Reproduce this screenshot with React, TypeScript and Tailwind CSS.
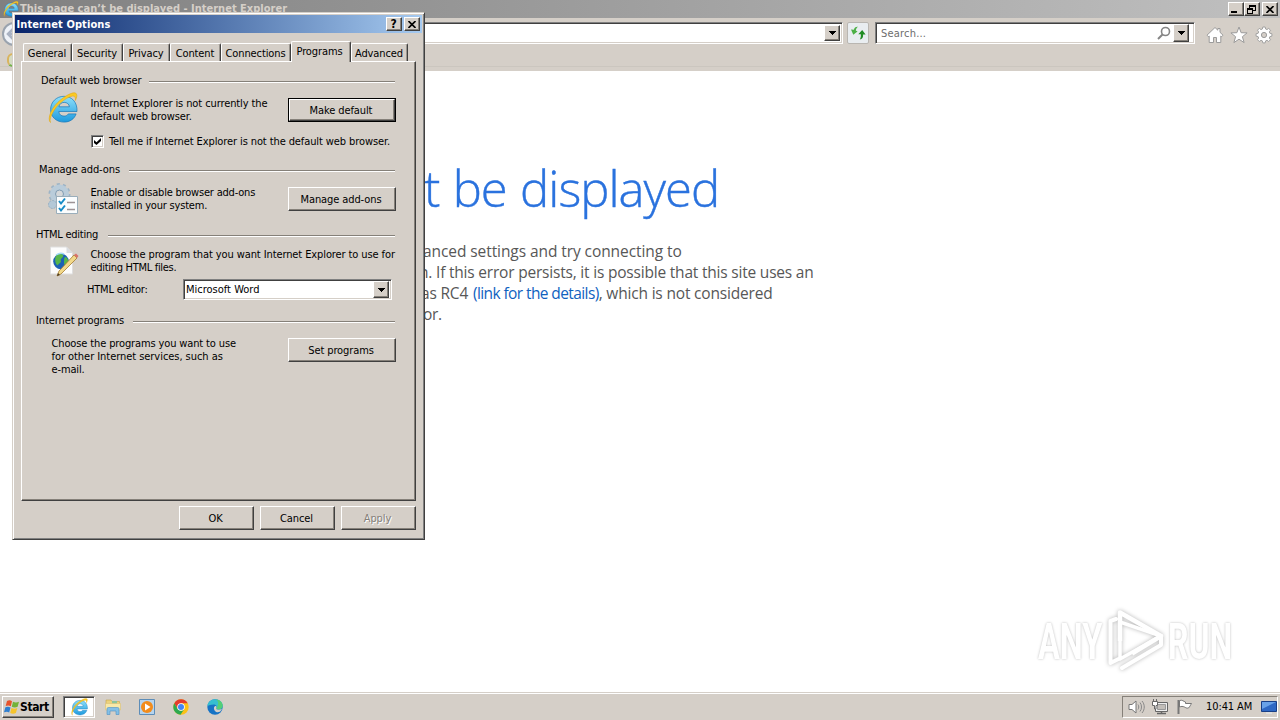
import type { ReactNode } from "react";

const RAISED =
  "border border-t-white border-l-white border-r-[#404040] border-b-[#404040] shadow-[inset_-1px_-1px_0_#858079] bg-[#d5cfc8]";
const SUNKEN =
  "border border-t-[#808080] border-l-[#808080] border-r-white border-b-white shadow-[inset_1px_1px_0_#404040,inset_-1px_-1px_0_#d5cfc8] bg-white";

function IeLogo({ className }: { className: string }) {
  return (
    <svg viewBox="1 1 30 31" className={className}>
      <defs>
        <linearGradient id="ieBlue" x1="0" y1="0" x2="0" y2="1">
          <stop offset="0" stopColor="#8fe0fa" />
          <stop offset="1" stopColor="#1d9ade" />
        </linearGradient>
      </defs>
      <path
        d="M30 20H11.800c.3 3 2.300 4.600 5.200 4.600 2 0 3.500-.8 4.300-2.200h7.800c-1.800 5.200-6.400 8.200-12 8.200C9.300 30.600 3.600 25.400 3.600 18S9.300 4.800 17 4.800 30.500 10.500 30 20zM11.900 15.300h10.500c-.3-2.800-2.400-4.400-5.200-4.400s-4.800 1.600-5.300 4.400z"
        fill="url(#ieBlue)"
        stroke="#1877b8"
        strokeWidth=".7"
      />
      <path
        d="M3.500 31C-.5 27 5 15 14 8 21 2.500 28-.5 29.500 2.500c.8 1.600.2 4-1.200 6.500.4-3-.3-4.700-2.600-4.400C21.500 5 12 11 7 19c-3.500 5.800-4.500 9.500-3.500 12z"
        fill="#fbc924"
        stroke="#dba210"
        strokeWidth=".5"
      />
    </svg>
  );
}

function Arrow() {
  return (
    <svg viewBox="0 0 7 4" className="h-1 w-[7px]" shapeRendering="crispEdges">
      <path d="M0 0h7L3.500 4z" fill="#000" />
    </svg>
  );
}

function WinButton({ children, className }: { children: ReactNode; className: string }) {
  return (
    <button className={`${RAISED} flex h-[14px] w-4 items-center justify-center pr-px ${className}`}>
      {children}
    </button>
  );
}

function CloseGlyph() {
  return (
    <svg viewBox="0 0 8 7" className="h-[7px] w-2">
      <path d="M.5 0l7 7M7.500 0l-7 7" stroke="#000" strokeWidth="1.600" />
    </svg>
  );
}

function BrowserChrome() {
  return (
    <header className="flex h-[71px] flex-col bg-[#d5cfc8]">
      <div className="flex h-[18px] items-center bg-linear-to-r from-[#808080] to-[#c0c0c0] pr-[2px] pl-[3px]">
        <IeLogo className="h-4 w-4 shrink-0" />
        <span className="ml-px flex-1 text-[11px] leading-[18px] font-bold tracking-[0.01px] whitespace-nowrap text-[#d5cfc8]">
          This page can’t be displayed - Internet Explorer
        </span>
        <WinButton className="">
          <span className="mt-[6px] mr-1 h-[2px] w-[6px] bg-black" />
        </WinButton>
        <WinButton className="mr-[2px]">
          <svg viewBox="0 0 9 9" className="h-[9px] w-[9px]" shapeRendering="crispEdges">
            <path d="M2.500 3V.5h6v5H6M2 1h7M.5 3.500h5v5h-5zM0 4h6" fill="none" stroke="#000" />
          </svg>
        </WinButton>
        <WinButton className="">
          <CloseGlyph />
        </WinButton>
      </div>
      <div className="flex h-[31px] items-start pt-1">
        <div className="ml-[2px] h-6 w-6 shrink-0 rounded-full border-2 border-[#9aa3ae] bg-[#eef2f8]">
          <svg viewBox="0 0 20 20" className="h-5 w-5">
            <path d="M10 4L4 10l6 6M4 10h12" fill="none" stroke="#a9b2c2" strokeWidth="2.500" />
          </svg>
        </div>
        <div className={`${SUNKEN} ml-10 flex h-[22px] flex-1 justify-end p-[2px]`}>
          <button className={`${RAISED} flex w-4 items-center justify-center`}>
            <Arrow />
          </button>
        </div>
        <button className="ml-1 flex h-[22px] w-[22px] items-center justify-center rounded-[2px] border border-[#b9b6b1] bg-[#e9edf0]">
          <svg viewBox="0 0 16 14" className="h-[14px] w-4">
            <path d="M8 .8C5.600.600 4.300 1.600 3.900 3.800L1 3.400l2.300 5.400L7.500 5.400 5.800 4.500C6 3 6.600 1.800 8 .8z" fill="#4cb046" />
            <path d="M9.800 13.600c2.500-.6 3.500-2.400 3.300-5.200l2.500.1L12.200 4 8.300 8.200l2.500.1c.2 2.100 0 3.700-1 5.300z" fill="#218c24" />
          </svg>
        </button>
        <div className={`${SUNKEN} ml-[6px] flex h-[22px] w-[320px] items-center py-[2px] pr-[5px] pl-[5px]`}>
          <span className="flex-1 pt-[2px] text-[11px] tracking-[0.2px] text-[#6d6d6d]">Search...</span>
          <svg viewBox="0 0 14 14" className="mr-[2px] h-[14px] w-[14px]">
            <circle cx="8.500" cy="5.500" r="4" fill="none" stroke="#858585" strokeWidth="1.600" />
            <path d="M5.500 8.500L1 13" stroke="#858585" strokeWidth="2" />
          </svg>
          <button className={`${RAISED} flex h-[18px] w-4 items-center justify-center`}>
            <Arrow />
          </button>
        </div>
        <svg viewBox="0 0 18 18" className="mt-1 ml-[11px] h-[18px] w-[18px]">
          <path
            d="M9 1.500L1 9.200l1.400 1.500.8-.7v6.500h4.300v-5h3v5h4.300V10l.8.7L17 9.200l-3-2.900V2.500h-2.200v1.700z"
            fill="#fff"
            stroke="#9b9b9b"
          />
        </svg>
        <svg viewBox="0 0 18 18" className="mt-1 ml-[6px] h-[18px] w-[18px]">
          <path d="M9 1l2.100 5.700 6 .2-4.700 3.800 1.700 5.900L9 13.200l-5.100 3.400 1.700-5.900L.9 6.900l6-.2z" fill="#fff" stroke="#9b9b9b" />
        </svg>
        <svg viewBox="0 0 18 18" className="mt-1 mr-[7px] ml-[7px] h-[18px] w-[18px]">
          <path
            d="M7.800 1h2.400l.4 2 1.400.6 1.700-1.200 1.800 1.800-1.200 1.700.6 1.400 2 .4v2.500l-2 .4-.6 1.400 1.200 1.700-1.800 1.800-1.700-1.200-1.400.6-.4 2H7.800l-.4-2-1.400-.6-1.700 1.200-1.800-1.800 1.200-1.700-.6-1.400-2-.4V7.700l2-.4.6-1.400-1.200-1.700 1.800-1.800L6 3.600 7.400 3z"
            fill="#fff"
            stroke="#9b9b9b"
            strokeWidth=".9"
          />
          <circle cx="9" cy="9" r="2.600" fill="#d5cfc8" stroke="#9b9b9b" />
        </svg>
      </div>
      <div className="flex flex-1 items-center border-b border-[#d5cfc8] shadow-[inset_0_-3px_0_#d5cfc8,inset_0_-4px_0_#cbc6bf]">
        <div className="ml-[7px] h-[14px] w-3 rounded-full border-2 border-[#d9b45e] border-b-[#73b34b] bg-[#d5dcc4]" />
      </div>
    </header>
  );
}

function ErrorPage() {
  return (
    <main className="flex flex-1 flex-col bg-white pl-[421px] font-['Open_Sans','Noto_Sans',sans-serif]">
      <h1 className="mt-[81px] ml-[3px] h-[72px] text-[49px] leading-[72px] font-light tracking-[-0.97px] whitespace-nowrap text-[#2a72de] [-webkit-text-stroke:0.4px_#2a72de] [word-spacing:1.500px]">
        t be displayed
      </h1>
      <div className="mt-[17px] text-[15.5px] leading-[21px] whitespace-nowrap text-[#575757]">
        <p className="ml-[2px] tracking-[-0.08px]">anced settings and try connecting to</p>
        <p className="-ml-[2px] tracking-[-0.2px]">n. If this error persists, it is possible that this site uses an</p>
        <p className="tracking-[-0.18px]">
          as RC4 <a className="ml-px tracking-[-0.6px] text-[#0f62bf]">(link for the details)</a>, which is not considered
        </p>
        <p className="ml-[2px] tracking-[-0.3px]">or.</p>
      </div>
    </main>
  );
}

function Watermark() {
  return (
    <div className="absolute top-[608px] left-[1038px] flex h-16 w-[200px] items-center font-['Roboto',sans-serif] text-[50px] leading-[64px] font-bold text-white [text-shadow:0_0_3px_#b8b8b8]">
      <span className="w-[70px] origin-left">
        <span className="inline-block origin-left scale-x-[0.65] pt-1">ANY</span>
      </span>
      <svg viewBox="0 0 56 64" className="h-16 w-14 shrink-0 drop-shadow-[0_0_2px_#b5b5b5]">
        <path d="M12 33V4.500L53 28 24 45.500" fill="none" stroke="#fff" strokeWidth="4.500" strokeLinejoin="round" />
        <path d="M12 33V51L53 28 12 14" fill="none" stroke="#fff" strokeWidth="3.500" strokeLinejoin="round" />
        <path d="M8 11l-5.500 2v42l8-4M14 60l39-23v-9" fill="none" stroke="#fff" strokeWidth="4" strokeLinejoin="round" strokeLinecap="round" />
      </svg>
      <span className="ml-1 inline-block w-[64px]">
        <span className="inline-block origin-left scale-x-[0.64] pt-1">RUN</span>
      </span>
    </div>
  );
}

function Tab({ label, width }: { label: string; width: string }) {
  return (
    <div
      className={`flex h-[18px] shrink-0 items-center justify-center rounded-t-[2px] border-t border-r border-l border-t-white border-r-[#404040] border-l-white pt-px pr-px whitespace-nowrap shadow-[inset_-1px_0_0_#9a958e] ${width}`}
    >
      {label}
    </div>
  );
}

function Heading({ children, className }: { children: ReactNode; className: string }) {
  return (
    <div className={`flex h-4 items-center ${className}`}>
      <span className="whitespace-nowrap">{children}</span>
      <div className="mt-[3px] mr-px h-[2px] flex-1 border-t border-b border-t-[#858079] border-b-white" />
    </div>
  );
}

function PushButton({ children, className }: { children: ReactNode; className: string }) {
  return (
    <button className={`${RAISED} flex h-6 shrink-0 items-center justify-center pr-[2px] whitespace-nowrap ${className}`}>
      {children}
    </button>
  );
}

function AddonsIcon() {
  return (
    <svg viewBox="0 0 32 32" className="mt-[6px] h-8 w-8 shrink-0">
      <circle cx="12.500" cy="11" r="9.500" fill="none" stroke="#9db4c6" strokeWidth="3" strokeDasharray="3 2.970" />
      <circle cx="12.500" cy="11" r="6.800" fill="none" stroke="#b9ccda" strokeWidth="5.400" />
      <circle cx="12.500" cy="11" r="4" fill="#d5d8da" stroke="#7e9cb4" />
      <circle cx="5.500" cy="21.500" r="4" fill="#b3c8d7" stroke="#93adc0" strokeDasharray="2 1" />
      <path d="M9.500 13.500h21v17h-21z" fill="#fbfdfe" stroke="#9aaebb" />
      <path d="M12 18l2 2.500 4-5M12 25l2 2.500 4-5" fill="none" stroke="#168bc6" strokeWidth="2" />
      <path d="M20 19.500h8M20 26.500h8" stroke="#9b9295" strokeWidth="1.300" />
    </svg>
  );
}

function HtmlIcon() {
  return (
    <svg viewBox="0 0 30 32" className="mt-1 h-8 w-[30px] shrink-0">
      <path d="M1.500 1h16l6 6v21h-22z" fill="#fcfcfc" stroke="#dedede" />
      <path d="M17.500 1v6h6z" fill="#d8dce0" />
      <circle cx="12" cy="15.500" r="7.800" fill="#1c61b5" />
      <path d="M7 10c3-3 6-2 7-1s-1 3-2 4 1 3-1 4-2 3-3 2-3-5-1-9zM16 11c2 0 4 3 3 6s-4 3-4 0 0-5 1-6z" fill="#56b54a" />
      <path d="M7 9c3-2 6-2 8-1" stroke="#a6dcf6" strokeWidth="1.500" fill="none" />
      <path d="M8 30l2-5L25 9l3 3-16 16z" fill="#f2d98a" stroke="#a47b32" strokeWidth=".8" />
      <path d="M25 9l2-1.500 2.500 2.500L28 12z" fill="#d9736a" />
      <path d="M8 30l1-3 2 2z" fill="#4b3b24" />
    </svg>
  );
}

function OptionsDialog() {
  return (
    <section className="absolute top-3 left-3 flex h-[528px] w-[413px] flex-col border border-t-[#d5cfc8] border-r-[#404040] border-b-[#404040] border-l-[#d5cfc8] bg-[#d5cfc8] p-[2px] text-[11px] leading-[13px] tracking-[-0.1px] text-black shadow-[inset_1px_1px_0_#fff,inset_-1px_-1px_0_#808080]">
      <div className="flex h-[18px] items-center bg-linear-to-r from-[#0a246a] to-[#a6caf0] pr-[2px] pl-[1.5px]">
        <span className="flex-1 font-bold tracking-[0.1px] text-white">Internet Options</span>
        <WinButton className="mr-[2px]">
          <span className="text-[12px] leading-3 font-bold">?</span>
        </WinButton>
        <WinButton className="">
          <CloseGlyph />
        </WinButton>
      </div>
      <div className="mt-2 flex h-5 items-end pl-2">
        <Tab label="General" width="w-[49px]" />
        <Tab label="Security" width="w-[51px]" />
        <Tab label="Privacy" width="w-[47px]" />
        <Tab label="Content" width="w-[51px]" />
        <Tab label="Connections" width="w-[70px]" />
        <div className="z-10 -mb-px flex h-[21px] w-[60px] shrink-0 items-center justify-center rounded-t-[2px] border-t border-r border-l border-t-white border-r-[#404040] border-l-white bg-[#d5cfc8] pr-[3px] pb-px shadow-[inset_-1px_0_0_#9a958e]">
          Programs
        </div>
        <Tab label="Advanced" width="w-[57px]" />
      </div>
      <div className="mr-[6px] ml-[6px] flex h-[440px] flex-col border border-t-white border-r-[#404040] border-b-[#404040] border-l-white pt-[10px] pr-[19px] shadow-[inset_-1px_-1px_0_#858079]">
        <Heading className="gap-[7px] pl-[19px]">Default web browser</Heading>
        <div className="flex h-[42px] items-start pl-[26px]">
          <IeLogo className="mt-1 h-8 w-[30px] shrink-0" />
          <p className="mt-[9px] ml-[12.5px] flex-1 whitespace-nowrap">
            Internet Explorer is not currently the
            <br />
            default web browser.
          </p>
          <div className="mt-[10px] border border-black">
            <PushButton className="h-[22px] w-[106px]">Make default</PushButton>
          </div>
        </div>
        <label className="flex h-[22px] items-center pl-[69px]">
          <span className={`${SUNKEN} flex h-[13px] w-[13px] items-center justify-center`}>
            <svg viewBox="0 0 7 7" className="h-[7px] w-[7px]">
              <path d="M0 2v3l2.500 2L7 3V0L2.500 4.300z" fill="#000" />
            </svg>
          </span>
          <span className="ml-[5px] whitespace-nowrap">Tell me if Internet Explorer is not the default web browser.</span>
        </label>
        <Heading className="mt-[9px] gap-[9px] pl-[17px]">Manage add-ons</Heading>
        <div className="flex h-[49px] items-start pl-[25px]">
          <AddonsIcon />
          <p className="mt-[9px] ml-[11.5px] flex-1 tracking-[-0.2px] whitespace-nowrap">
            Enable or disable browser add-ons
            <br />
            installed in your system.
          </p>
          <PushButton className="mt-[10px] w-[108px]">Manage add-ons</PushButton>
        </div>
        <Heading className="gap-[10px] pl-[14px] tracking-[-0.25px]">HTML editing</Heading>
        <div className="flex h-[37px] items-start pl-[27px]">
          <HtmlIcon />
          <p className="mt-[6px] ml-[11.5px] whitespace-nowrap">
            Choose the program that you want Internet Explorer to use for
            <br />
            <span className="tracking-[-0.3px]">editing HTML files.</span>
          </p>
        </div>
        <div className="flex h-[21px] items-center pl-[65px]">
          <span className="w-24 tracking-[-0.2px]">HTML editor:</span>
          <div className={`${SUNKEN} flex h-[21px] w-[209px] items-center p-[2px]`}>
            <span className="flex-1 tracking-normal">Microsoft Word</span>
            <button className={`${RAISED} flex h-[17px] w-4 items-center justify-center`}>
              <Arrow />
            </button>
          </div>
        </div>
        <Heading className="mt-3 gap-[9px] pl-[14px]">Internet programs</Heading>
        <div className="flex items-start pl-[29.5px]">
          <p className="mt-[9px] flex-1 tracking-[-0.13px] whitespace-nowrap">
            Choose the programs you want to use
            <br />
            <span className="tracking-[-0.05px]">for other Internet services, such as</span>
            <br />
            e-mail.
          </p>
          <PushButton className="mt-[10px] w-[108px]">Set programs</PushButton>
        </div>
      </div>
      <div className="mt-[5px] mr-[6px] flex justify-end gap-[6px]">
        <PushButton className="w-[75px]">OK</PushButton>
        <PushButton className="w-[75px]">Cancel</PushButton>
        <PushButton className="w-[75px] text-[#858079] [text-shadow:1px_1px_0_#fff]">Apply</PushButton>
      </div>
    </section>
  );
}

function Taskbar() {
  return (
    <footer className="flex h-7 items-center border-t border-[#d5cfc8] bg-[#d5cfc8] pr-[2px] pl-[2px] text-[11px] shadow-[inset_0_1px_0_#fff]">
      <button className={`${RAISED} mt-px flex h-[22px] w-[52px] items-center pl-px`}>
        <svg viewBox="0 0 16 16" className="h-4 w-4 shrink-0">
          <path d="M3 2c2-1 3.500-.8 5 .2L6.800 7.300C5.200 6.300 3.500 6.300 1.700 7z" fill="#e8532b" />
          <path d="M9 2.800c2 1 3.800 1 6 0l-1.400 5c-2 .9-4 .8-5.800-.1z" fill="#74b23a" />
          <path d="M1.400 8.200c1.800-.8 3.500-.7 5.100.2l-1.300 5C3.600 12.400 2 12.500 0 13.300z" fill="#2f7fd0" />
          <path d="M7.500 9c1.900 1 3.800 1 5.800.1l-1.400 5c-2 .9-4 .8-5.700-.1z" fill="#f6c42c" />
        </svg>
        <span className="text-[12px] font-bold tracking-[-0.4px]">Start</span>
      </button>
      <div className={`${SUNKEN} mt-px ml-[9px] flex h-[22px] w-[32px] items-center justify-center`}>
        <IeLogo className="h-[18px] w-[17px]" />
      </div>
      <svg viewBox="0 0 16 16" className="mt-px ml-[10px] h-4 w-4">
        <path d="M1 3V1h5l1 1.500h7.500V8H1z" fill="#ecd27c" stroke="#c7a64a" strokeWidth=".6" />
        <path d="M7 2h5v3H7z" fill="#8cc49b" />
        <path d="M.5 4.500h15V11H.5z" fill="#f8e8a8" stroke="#dcc173" strokeWidth=".6" />
        <path d="M2 15.500V10c0-1 .5-1.500 1.500-1.500h9c1 0 1.500.5 1.500 1.500v5.500h-3V12H5v3.500z" fill="#84bfe6" stroke="#4d91c4" strokeWidth=".6" />
      </svg>
      <svg viewBox="0 0 16 16" className="ml-[18px] h-4 w-4">
        <path d="M.5.5h15v15H.5z" fill="#b6d4ee" stroke="#5d8db8" />
        <circle cx="8" cy="8" r="6" fill="#f28c1c" />
        <path d="M6 4.500v7l5.500-3.500z" fill="#fff" />
      </svg>
      <svg viewBox="0 0 16 16" className="ml-[18px] h-4 w-4">
        <circle cx="8" cy="8" r="7.700" fill="#fbc116" />
        <path d="M1.300 4.200A7.700 7.700 0 0 1 14.700 4.200H8L4.700 10z" fill="#e33b2e" />
        <path d="M1.300 4.200A7.700 7.700 0 0 0 7.500 15.700L11.300 10 8 11.700 4.700 10z" fill="#2da94f" />
        <circle cx="8" cy="8" r="3.800" fill="#fff" />
        <circle cx="8" cy="8" r="3" fill="#4285f4" />
      </svg>
      <svg viewBox="0 0 16 16" className="ml-[18px] h-4 w-4">
        <circle cx="8" cy="8" r="7.700" fill="#1673c5" />
        <path d="M.4 7C1 2.500 4.500.3 8 .3c4.500 0 7.700 3 7.700 6.200 0 2.500-2 4-4.200 4-1.500 0-2.500-.5-2-1.200.8-1.300 0-3.800-3-3.800-2.500 0-4.800.8-6.100 1.500z" fill="#36bfd0" />
        <path d="M9 .4c4 .3 6.700 3 6.700 6.100 0 2.500-2 4-4.200 4-1.500 0-2.500-.5-2-1.200C10.500 7 13 3 9 .4z" fill="#55cf76" />
        <path d="M9.300 9.300c-.5.700.5 1.500 2.500 1.500 1.500 0 3-.7 3.300-1.200-.3 1.500-1.600 2.900-3 3.500-3 .8-5.600-1.600-5.100-4.600.3-1 1-1.700 2-1.500.6.500.7 1.500.3 2.300z" fill="#d5cfc8" />
      </svg>
      <div className="flex-1" />
      <div className="mt-px flex h-[22px] w-[156px] items-center border border-t-[#858079] border-r-white border-b-white border-l-[#858079] pl-[5px]">
        <svg viewBox="0 0 17 16" className="h-4 w-[17px]">
          <path d="M1 5.500h3L8 2v12l-4-3.500H1z" fill="#fff" stroke="#777" />
          <path d="M10 5.500c1 1.500 1 3.500 0 5M12 3.500c2 2.500 2 6.500 0 9M14 2c3 3.500 3 8.500 0 12" fill="none" stroke="#888" />
        </svg>
        <svg viewBox="0 0 16 16" className="ml-[7px] h-4 w-4">
          <path d="M3.500 3.500h12v9h-12z" fill="#eee" stroke="#666" />
          <path d="M5.500 5.500h8v5h-8z" fill="#c2beb9" stroke="#999" />
          <path d="M5 14.500h9M9.500 12.500v2" stroke="#666" strokeWidth="1.500" />
          <path d="M.5 2.500h5v4h-1.500V10H2.500V6.500h-2zM1.500 2.500V0M4.500 2.500V0" fill="#fff" stroke="#666" />
        </svg>
        <svg viewBox="0 0 17 16" className="ml-2 h-4 w-[17px]">
          <path d="M2.500 1v14" stroke="#777" strokeWidth="2" />
          <path d="M3.500 1.500c3-1 4 1 6 1.500v1.500h6c-1 1.500-1.500 3-3 4.500-2 .5-3-.5-4-1-2-.8-3-.8-5 0z" fill="#fff" stroke="#777" />
        </svg>
        <span className="ml-[13px] flex-1 pt-px tracking-[-0.1px] whitespace-nowrap">10:41 AM</span>
        <svg viewBox="0 0 16 14" className="mt-[2px] h-[14px] w-4">
          <path d="M.5.500h15v10H.5z" fill="#2e68c4" stroke="#183f87" />
          <path d="M1 1h14L1 8z" fill="#69a2e8" />
          <path d="M5 11.500h6v1H5z" fill="#e7edf3" />
        </svg>
      </div>
    </footer>
  );
}

export default function App() {
  return (
    <div className="relative flex h-[720px] w-[1280px] flex-col overflow-hidden bg-white font-['DejaVu_Sans_Condensed','DejaVu_Sans',sans-serif]">
      <BrowserChrome />
      <ErrorPage />
      <Taskbar />
      <Watermark />
      <OptionsDialog />
    </div>
  );
}
